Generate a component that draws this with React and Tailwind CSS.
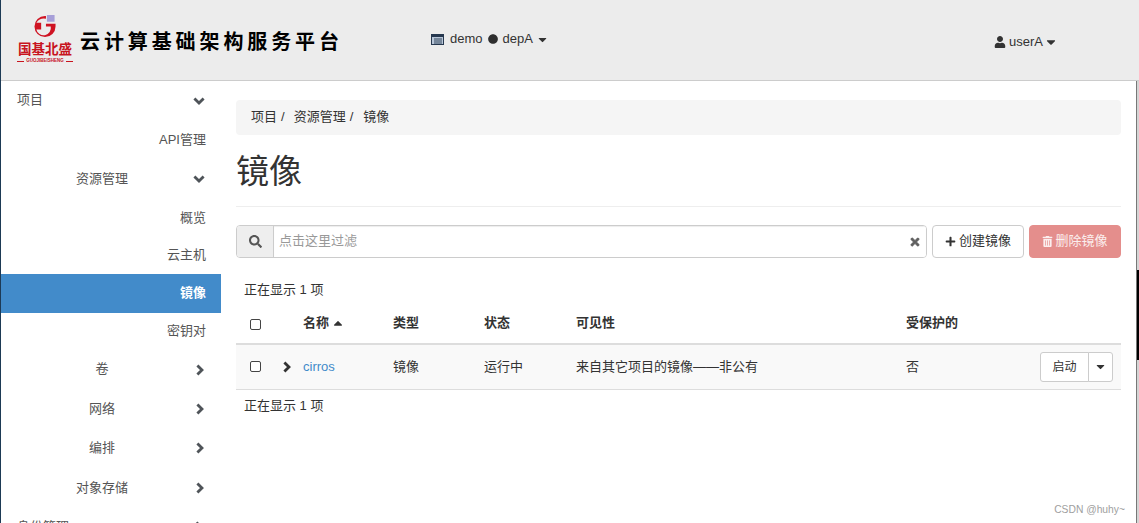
import { FaSearch, FaTimes, FaPlus, FaTrashAlt, FaUser, FaCaretDown, FaCaretUp, FaCircle } from 'react-icons/fa'

const cjk = "font-['Liberation_Sans','Noto_Sans_CJK_SC',sans-serif]"

const ChevronDown = ({ className }) => (
  <svg width="12" height="8" viewBox="0 0 12 8" className={className}>
    <path d="M1.4 1.4 L6 6 L10.6 1.4" fill="none" stroke="currentColor" strokeWidth="2.8" />
  </svg>
)

const ChevronRight = ({ className }) => (
  <svg width="8" height="12" viewBox="0 0 8 12" className={className}>
    <path d="M1.4 1.4 L6 6 L1.4 10.6" fill="none" stroke="currentColor" strokeWidth="2.8" />
  </svg>
)

const Logo = () => (
  <div className="flex flex-col items-center w-[56px] ml-[17px] mt-[15px] shrink-0">
    <svg width="24" height="23" viewBox="0 0 24 24">
      <path d="M12 1 A11 11 0 1 0 23 12 L23 9 L13 9 L13 12 L18 12 A6 6 0 0 1 3 15 L8 15 L8 8 L3 8 A10 10 0 0 1 13 4 L13 1 Z" fill="#cf1322" />
      <rect x="14" y="0" width="8" height="7" fill="#8a7fd0" opacity="0.7" />
    </svg>
    <div className="mt-[3px] text-[13.5px] leading-[17px] font-bold text-[#c8141e] whitespace-nowrap">国基北盛</div>
    <div className="flex items-center gap-[2px] text-[#c8141e]">
      <span className="w-[7px] h-[1px] bg-[#c8141e]" />
      <span className="text-[4.5px] leading-[6px] font-bold whitespace-nowrap">GUOJIBEISHENG</span>
      <span className="w-[7px] h-[1px] bg-[#c8141e]" />
    </div>
  </div>
)

const ProjectIcon = () => (
  <svg width="13" height="11" viewBox="0 0 13 11" className="mr-[6px]">
    <rect x="0.5" y="0.5" width="12" height="10" fill="#b8c6d8" stroke="#26384f" />
    <rect x="1" y="1" width="11" height="2" fill="#26384f" />
    <path d="M3 5h8M3 7h8M3 9h8" stroke="#33465c" strokeWidth="1" />
  </svg>
)

const Header = () => (
  <header className="h-[81px] shrink-0 bg-[#ececec] border-b border-[#cccccc] flex">
    <Logo />
    <div className="ml-[7px] mt-[30px] text-[20px] leading-[24px] font-bold text-black tracking-[3.9px] whitespace-nowrap w-[266px]">云计算基础架构服务平台</div>
    <div className="ml-[85px] mt-[30px] h-[18px] flex items-center text-[13px] text-[#333333] w-[563px]">
      <ProjectIcon />
      <span>demo</span>
      <FaCircle className="mx-[5px] text-[10px] text-[#2e2e2e]" />
      <span>depA</span>
      <FaCaretDown className="ml-[3px] text-[13px]" />
    </div>
    <div className="mt-[33px] h-[18px] flex items-center text-[13px] text-[#333333]">
      <FaUser className="mr-[3px] text-[12px]" />
      <span>userA</span>
      <FaCaretDown className="ml-[1px] text-[14px]" />
    </div>
  </header>
)

const Leaf = ({ label, active, tight }) => (
  <div className={`${tight ? 'h-[37px] pb-[2px]' : active ? 'h-[39px] pb-[2px]' : 'h-[39px]'} flex items-center justify-end pr-[15px] ${active ? 'bg-[#428bca] text-white font-bold' : 'text-[#555555]'}`}>
    {label}
  </div>
)

const Group = ({ label, open, raised, tall }) => (
  <div className={`${tall ? 'h-[40px]' : 'h-[39px]'} flex items-center text-[#555555]`}>
    <div className={`w-[204px] text-center ${raised ? 'pb-[2px]' : ''}`}>{label}</div>
    {open
      ? <ChevronDown className="-ml-[11px] text-[#4f5459]" />
      : <ChevronRight className="-ml-[8px] text-[#4f5459]" />}
  </div>
)

const Sidebar = () => (
  <aside className="w-[221px] shrink-0 text-[13px] overflow-hidden">
    <div className="h-[39px] flex items-center justify-between pl-[17px] pr-[16px] text-[#555555]">
      <span className="pb-[2px]">项目</span>
      <ChevronDown className="text-[#4f5459]" />
    </div>
    <Leaf label="API管理" />
    <Group label="资源管理" open />
    <Leaf label="概览" />
    <Leaf label="云主机" tight />
    <Leaf label="镜像" active />
    <Leaf label="密钥对" tight />
    <Group label="卷" raised />
    <Group label="网络" />
    <Group label="编排" tall />
    <Group label="对象存储" />
    <div className="h-[39px] flex items-center justify-between pl-[17px] pr-[18px] text-[#555555]">
      <span>身份管理</span>
      <ChevronRight className="text-[#4f5459]" />
    </div>
  </aside>
)

const Checkbox = () => (
  <input type="checkbox" className="appearance-none block w-[11px] h-[11px] border border-[#444444] rounded-[2px] bg-white" />
)

const Toolbar = () => (
  <div className="flex h-[33px] mt-[18px]">
    <div className="flex flex-1 border border-[#cccccc] rounded-[4px] overflow-hidden">
      <div className="w-[37px] bg-[#eeeeee] border-r border-[#cccccc] flex items-center justify-center">
        <FaSearch className="text-[13px] text-[#555555]" />
      </div>
      <div className="flex-1 bg-white flex items-center justify-between pl-[5px] pr-[5px] shadow-[inset_0_1px_1px_rgba(0,0,0,0.075)]">
        <span className="text-[#999999] pb-[2px]">点击这里过滤</span>
        <FaTimes className="text-[12px] text-[#606060] stroke-[30px]" />
      </div>
    </div>
    <button className="ml-[5px] w-[92px] bg-white border border-[#cccccc] rounded-[4px] flex items-center justify-center text-[#333333] pb-[1px]">
      <FaPlus className="text-[11px] mr-[3px]" />创建镜像
    </button>
    <button className="ml-[5px] w-[92px] bg-[#e48e8c] border border-[#e48e8c] rounded-[4px] flex items-center justify-center text-[#fbeeee] pb-[1px]">
      <FaTrashAlt className="text-[11px] mr-[2px]" />删除镜像
    </button>
  </div>
)

const Table = () => (
  <table className="w-full table-fixed border-collapse">
    <colgroup>
      <col className="w-[39px]" />
      <col className="w-[20px]" />
      <col className="w-[90px]" />
      <col className="w-[91px]" />
      <col className="w-[92px]" />
      <col className="w-[330px]" />
      <col className="w-[120px]" />
      <col />
    </colgroup>
    <thead>
      <tr className="h-[39px] border-b-2 border-[#dddddd] text-[#333333] font-bold text-left">
        <th className="pl-[14px]"><Checkbox /></th>
        <th />
        <th className="pl-[8px] pb-[2px]">
          <span className="inline-flex items-center">名称<FaCaretUp className="ml-[2px] text-[14px]" /></span>
        </th>
        <th className="pl-[8px] pb-[2px]">类型</th>
        <th className="pl-[8px] pb-[2px]">状态</th>
        <th className="pl-[8px] pb-[2px]">可见性</th>
        <th className="pl-[8px] pb-[2px]">受保护的</th>
        <th />
      </tr>
    </thead>
    <tbody>
      <tr className="h-[45px] bg-[#f9f9f9] border-b border-[#dddddd] text-[#333333]">
        <td className="pl-[14px]"><Checkbox /></td>
        <td className="pl-[8px]"><ChevronRight className="text-[#333333]" /></td>
        <td className="pl-[8px] text-[#428bca]">cirros</td>
        <td className="pl-[8px]">镜像</td>
        <td className="pl-[8px]">运行中</td>
        <td className="pl-[8px]">来自其它项目的镜像——非公有</td>
        <td className="pl-[8px]">否</td>
        <td className="pr-[8px]">
          <div className="flex justify-end">
            <button className="w-[49px] h-[30px] bg-white border border-[#cccccc] rounded-l-[3px] text-[12px] text-[#333333]">启动</button>
            <button className="w-[25px] h-[30px] -ml-[1px] bg-white border border-[#cccccc] rounded-r-[3px] flex items-center justify-center text-[#333333]">
              <FaCaretDown className="text-[13px]" />
            </button>
          </div>
        </td>
      </tr>
    </tbody>
  </table>
)

const Main = () => (
  <main className="flex-1 pl-[15px] pr-[18px] pt-[19px] text-[13px] text-[#333333] min-w-0">
    <div className="h-[35px] bg-[#f5f5f5] rounded-[4px] flex items-center px-[15px] pb-[2px]">
      <span>项目</span>
      <span className="ml-[4px] mr-[9px]">/</span>
      <span>资源管理</span>
      <span className="ml-[4px] mr-[10px]">/</span>
      <span>镜像</span>
    </div>
    <div className="h-[72px] border-b border-[#eeeeee] flex items-center pt-[2px]">
      <h1 className="text-[33px] leading-[36px] font-normal">镜像</h1>
    </div>
    <Toolbar />
    <div className="h-[47px] pl-[8px] pt-[22px] leading-[19px]">正在显示 1 项</div>
    <Table />
    <div className="pl-[8px] pt-[6px] leading-[19px]">正在显示 1 项</div>
  </main>
)

export default function App() {
  return (
    <div className={`h-[523px] w-[1139px] overflow-hidden flex flex-col bg-white relative ${cjk}`}>
      <Header />
      <div className="flex flex-1 min-h-0">
        <Sidebar />
        <Main />
      </div>
      {/* window edges of the captured desktop */}
      <div className="absolute left-0 top-0 bottom-0 w-[1px] bg-[#1d3a55]" />
      <div className="absolute right-0 top-[81px] bottom-0 w-[3px] bg-[#d4d4d4] border-l border-[#777777]" />
      <div className="absolute right-0 top-[270px] h-[90px] w-[2px] bg-black" />
      <div className="absolute right-[14px] bottom-[6px] text-[10.3px] text-[#a0a0a0]">CSDN @huhy~</div>
    </div>
  )
}
